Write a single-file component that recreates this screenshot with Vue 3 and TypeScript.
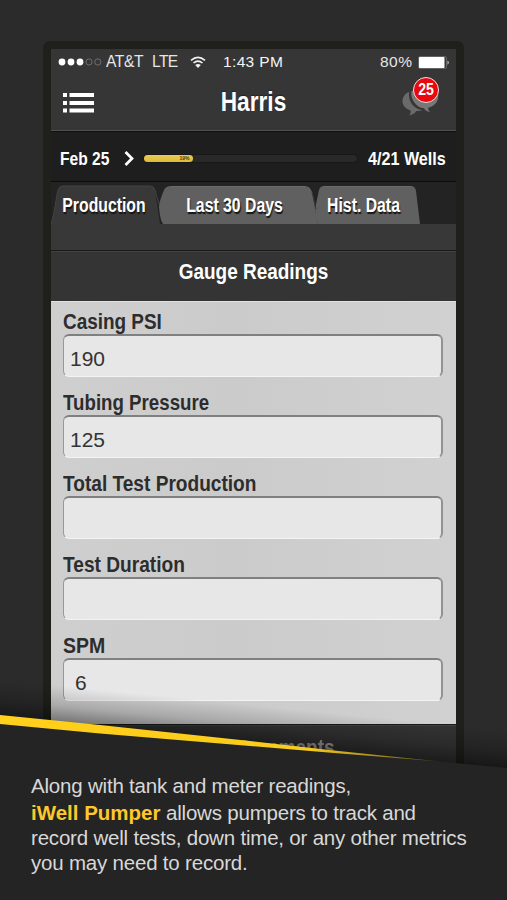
<script setup lang="ts">
interface Field {
  label: string
  value: string
  condense: number
  inset?: boolean
}

const tabs = [
  { name: 'Production', kind: 'production' },
  { name: 'Last 30 Days', kind: 'recent' },
  { name: 'Hist. Data', kind: 'history' },
]

const fields: Field[] = [
  { label: 'Casing PSI', value: '190', condense: 0.86 },
  { label: 'Tubing Pressure', value: '125', condense: 0.85 },
  { label: 'Total Test Production', value: '', condense: 0.868 },
  { label: 'Test Duration', value: '', condense: 0.87 },
  { label: 'SPM', value: '6', condense: 0.885, inset: true },
]

const progress = 23.2
</script>

<template>
  <main class="page">
    <section class="phone">
      <div class="screen">
        <header class="top">
          <div class="status">
            <svg class="signal" width="44" height="10" viewBox="0 0 44 10">
              <circle cx="4" cy="5" r="3.4" fill="#fff" />
              <circle cx="13" cy="5" r="3.4" fill="#fff" />
              <circle cx="22" cy="5" r="3.4" fill="#fff" />
              <circle cx="31" cy="5" r="3.1" fill="none" stroke="#858585" stroke-width=".7" />
              <circle cx="39.8" cy="5" r="3.1" fill="none" stroke="#858585" stroke-width=".7" />
            </svg>
            <span class="carrier">AT&amp;T</span>
            <span class="network">LTE</span>
            <svg class="wifi" width="16" height="13" viewBox="0 0 16 13">
              <path d="M1 4.4Q8-1.7 15 4.4M3.5 7Q8 3.1 12.5 7" fill="none" stroke="#f2f2f2" stroke-width="1.6" />
              <path d="M5.2 9Q8 6.800 10.800 9L8 12Z" fill="#f2f2f2" />
            </svg>
            <span class="time">1:43 PM</span>
            <span class="charge">80%</span>
            <svg class="battery" width="32" height="13" viewBox="0 0 32 13">
              <rect x=".5" y=".5" width="28" height="12" rx="1.5" fill="none" stroke="#777" stroke-width=".7" />
              <rect x="1" y="1" width="25.500" height="11" rx=".8" fill="#fff" />
              <path d="M29.6 4.500Q31.800 6.500 29.6 8.700Z" fill="#eee" />
            </svg>
          </div>
          <div class="nav">
            <svg class="menu" width="31" height="20" viewBox="0 0 31 20" fill="#fff">
              <path d="M0 0h4v4H0zM6.5 0H31v4H6.5zM0 8h4v4H0zM6.5 8H31v4H6.5zM0 15.500h4v4H0zM6.500 15.500H31v4H6.500z" />
            </svg>
            <h1 class="title">Harris</h1>
            <div class="chat">
              <svg width="38" height="28" viewBox="0 0 38 28">
                <path d="M7 2C2 4 .5 8 .5 11.500 .5 15.500 4 19 8.500 20.500c.5 2-.2 3.600-1.500 5 3.500-.7 6-2.400 7.500-4.500 2 .1 4-.1 6-.7C12 19 6 12 7 2Z" fill="#6a6a6a" />
                <path d="M9.500 1C8 9 14 17.500 22 18.300c1 2.200 3 3.500 6 3.700-1.500-1.300-2-2.600-1.800-4.200C33 16 37.500 11 36 3L34 0Z" fill="#777" />
              </svg>
              <span class="badge"><span class="count">25</span></span>
            </div>
          </div>
        </header>

        <div class="route">
          <span class="date">Feb 25</span>
          <svg class="chevron" width="10" height="15" viewBox="0 0 10 15">
            <path d="M1.500 1 8 7.500 1.500 14" fill="none" stroke="#fff" stroke-width="2.700" />
          </svg>
          <div class="track">
            <div class="fill" :style="{ width: progress + '%' }">19%</div>
          </div>
          <span class="wells">4/21 Wells</span>
        </div>

        <nav class="tabs">
          <svg class="shapes" width="405" height="42" viewBox="0 0 405 42">
            <path d="M0 42C4 30 5 15 7 8Q8 4 12 4H99Q103 4 104 8L109 42Z" fill="#383838" />
            <path d="M0 42C4 30 5 15 7 8Q8 4 12 4H99Q103 4 104 8L108 22" fill="none" stroke="#444" />
            <path d="M112 42Q109 38 108 25Q108 20 113 8Q115 4 120 4H254Q259 4 261 10L267 42Z" fill="#606060" />
            <path d="M267 42Q263 31 265 22L268 8Q269 4 273 4H360Q364 4 365 9L369 42Z" fill="#606060" />
            <path d="M261 10L265 27" fill="none" stroke="#3c3c3c" />
            <path d="M120 4.500H254M273 4.500H360" stroke="#6b6b6b" />
          </svg>
          <button v-for="tab in tabs" :key="tab.kind" class="tab" :class="tab.kind">
            <span class="name">{{ tab.name }}</span>
          </button>
        </nav>
        <div class="strip"></div>
        <h2 class="section"><span class="heading">Gauge Readings</span></h2>

        <form class="form">
          <div v-for="field in fields" :key="field.label" class="field">
            <label class="label" :style="{ transform: `scaleX(${field.condense})` }">{{ field.label }}</label>
            <div class="box" :class="{ inset: field.inset }">{{ field.value }}</div>
          </div>
        </form>
        <h2 class="section comments"><span class="heading">Comments</span></h2>
      </div>
    </section>

    <section class="caption">
      <svg class="slope" width="507" height="110" viewBox="0 0 507 110">
        <defs>
          <linearGradient id="shade" gradientUnits="userSpaceOnUse" x1="0" y1="40" x2="4" y2="0">
            <stop offset="0" stop-color="#000" stop-opacity=".5" />
            <stop offset=".5" stop-color="#000" stop-opacity=".18" />
            <stop offset="1" stop-color="#000" stop-opacity="0" />
          </linearGradient>
          <linearGradient id="gold" gradientUnits="userSpaceOnUse" x1="0" y1="0" x2="440" y2="0">
            <stop offset="0" stop-color="#ffd01c" />
            <stop offset=".7" stop-color="#f9cc1b" />
            <stop offset="1" stop-color="#5b4f20" />
          </linearGradient>
        </defs>
        <path d="M0 0H507V90L0 42Z" fill="url(#shade)" />
        <path d="M0 40 250 64 450 82.500 507 88V110H0Z" fill="#242424" />
        <path d="M0 35 100 45 250 61 334 70.500 440 81.500 334 73 250 66 100 53.500 0 44Z" fill="url(#gold)" />
      </svg>
      <div class="copy">
        <p class="line first">Along with tank and meter readings,</p>
        <p class="line"><strong>iWell Pumper</strong> allows pumpers to track and</p>
        <p class="line">record well tests, down time, or any other metrics</p>
        <p class="line">you may need to record.</p>
      </div>
    </section>
  </main>
</template>

<style>
body {
  margin: 0;
  background: #2b2b2b;
}
</style>

<style scoped>
.page {
  position: relative;
  box-sizing: border-box;
  width: 507px;
  height: 900px;
  padding: 41px 0 0 43px;
  overflow: hidden;
  background: #2b2b2b;
  font-family: "Liberation Sans", Arial, sans-serif;
}
h1, h2, p { margin: 0; }
.phone {
  box-sizing: border-box;
  width: 421px;
  height: 800px;
  padding: 8px;
  border-radius: 7px 7px 0 0;
  background: #1f1f1b;
}
.screen {
  width: 405px;
  background: #363636;
}
.top {
  box-sizing: border-box;
  height: 82px;
  border-bottom: 1px solid #505050;
  background: #363636;
}
.status {
  display: flex;
  align-items: center;
  height: 26px;
  padding-left: 7px;
  color: #e6e6e6;
  font-size: 15.500px;
  line-height: 26px;
  white-space: nowrap;
}
.signal { width: 44px; }
.carrier { width: 42px; margin-left: 4px; font-size: 15.600px; letter-spacing: -.4px; }
.network { width: 30px; margin-left: 4px; font-size: 15.600px; letter-spacing: -.6px; }
.wifi { margin-left: 8px; }
.time { width: 64px; margin-left: 17px; color: #f5f5f5; letter-spacing: .35px; }
.charge { width: 36px; margin-left: 93px; letter-spacing: .5px; }
.battery { margin-left: 2px; }
.nav {
  display: grid;
  grid-template-columns: 71px 1fr 71px;
  height: 55px;
}
.menu { margin: 18px 0 0 12px; }
.title, .date, .wells, .name, .heading, .label, .count { font-weight: 700; }
.title {
  color: #fff;
  font-size: 28px;
  line-height: 54px;
  text-align: center;
  text-shadow: 0 -1px 1px #222;
  transform: scaleX(.81);
}
.chat { position: relative; padding: 15px 0 0 17px; }
.badge {
  position: absolute;
  top: 2px;
  left: 28px;
  box-sizing: border-box;
  width: 26px;
  height: 26px;
  border: 1.500px solid #f5dddd;
  border-radius: 50%;
  background: #e9080d;
  color: #fff;
  font-size: 17px;
  line-height: 24px;
  text-align: center;
}
.count { display: block; transform: scaleX(.83); }
.route {
  display: flex;
  align-items: center;
  box-sizing: border-box;
  height: 51px;
  padding: 3px 0 0 9px;
  border-top: 1px solid #111;
  border-bottom: 1px solid #0d0d0d;
  background: #1e1e1e;
  color: #fff;
  font-size: 19px;
  line-height: 25px;
  white-space: nowrap;
}
.date {
  width: 52px;
  transform: scaleX(.82);
  transform-origin: left;
}
.chevron { margin-left: 12px; }
.track {
  box-sizing: border-box;
  width: 215px;
  height: 9px;
  flex-shrink: 0;
  margin-left: 9px;
  border: 1px solid #181818;
  border-radius: 5px;
  background: #292929;
}
.fill {
  box-sizing: border-box;
  height: 7px;
  padding-right: 4px;
  border-radius: 4px;
  background: linear-gradient(#e8cb59, #dfbb36);
  color: #4a3a0a;
  font-size: 5px;
  font-weight: 700;
  line-height: 7px;
  text-align: right;
}
.wells {
  width: 80px;
  margin-left: 10px;
  transform: scaleX(.85);
  transform-origin: left;
}
.tabs {
  position: relative;
  display: flex;
  height: 42px;
  background: #232323;
}
.shapes { position: absolute; inset: 0; }
.tab {
  position: relative;
  height: 42px;
  padding: 4px 0 0;
  border: 0;
  background: none;
  color: #fff;
  font-family: inherit;
  font-size: 19.500px;
  line-height: 38px;
  text-align: center;
  text-shadow: 1px 2px 1px #151515;
  white-space: nowrap;
}
.name { display: block; transform: scaleX(.81); }
.production { width: 106px; }
.recent { width: 155px; }
.history { width: 103px; }
.strip {
  height: 26px;
  background: #383838;
}
.section {
  box-sizing: border-box;
  height: 51px;
  border-top: 1px solid #191919;
  background: #343434;
  box-shadow: inset 0 1px #414141;
  color: #fff;
  font-size: 22px;
  line-height: 42px;
  text-align: center;
}
.heading { display: block; transform: scaleX(.862); }
.form {
  box-sizing: border-box;
  height: 423px;
  padding: 9px 13px 0 12px;
  border-top: 1px solid #e0e0e0;
  background: linear-gradient(90deg, #cfcfcf, #cbcbcb 45%, #d1d1d1);
}
.field { height: 81px; }
.label {
  display: block;
  height: 23px;
  color: #2d2d2d;
  font-size: 22px;
  line-height: 22px;
  white-space: nowrap;
  transform-origin: left;
}
.box {
  box-sizing: border-box;
  height: 43px;
  padding-left: 6px;
  border: 2px solid #808080;
  border-right-color: #929292;
  border-bottom: 1px solid #f4f4f4;
  border-left: 1px solid #999;
  border-radius: 6px;
  background: #e7e7e7;
  color: #333;
  font-size: 21px;
  line-height: 45px;
}
.inset { padding-left: 11px; }
.comments {
  padding-left: 64px;
  color: #aaa;
  line-height: 45px;
}
.caption {
  position: absolute;
  top: 680px;
  left: 0;
  width: 507px;
  height: 220px;
}
.slope { display: block; }
.copy {
  position: relative;
  box-sizing: border-box;
  height: 127px;
  margin-top: -17px;
  padding-left: 31px;
  background: #242424;
  color: #d8d8d8;
  font-size: 20.500px;
  letter-spacing: -.2px;
}
.line { height: 25px; line-height: 25px; white-space: nowrap; }
.first { height: 27px; }
.line strong { color: #fdc82b; letter-spacing: 0; }
</style>
